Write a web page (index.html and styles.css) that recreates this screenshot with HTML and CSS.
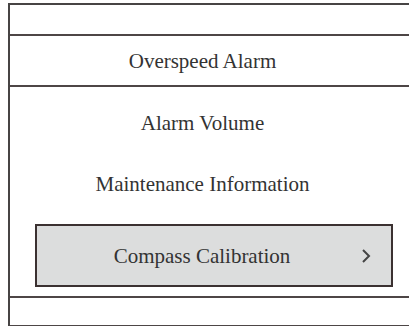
FILE: index.html
```html
<!DOCTYPE html>
<html lang="en">
<head>
<meta charset="UTF-8" />
<meta name="viewport" content="width=device-width, initial-scale=1" />
<title>Settings</title>
<link rel="stylesheet" href="styles.css">
</head>
<body>

<div class="panel">
  <div class="row blank-top"></div>
  <div class="row title">Overspeed Alarm</div>

  <div class="list">
    <div class="item">Alarm Volume</div>
    <div class="item">Maintenance Information</div>
    <div class="item selected">
      <span class="label">Compass Calibration</span>
      <svg class="chevron" width="10" height="16" viewBox="0 0 10 16">
        <polyline points="2,2 8,8 2,14" fill="none" stroke="#444" stroke-width="2" />
      </svg>
    </div>
  </div>

  <div class="row blank-bottom"></div>
</div>

</body>
</html>
```

FILE: styles.css
```css
body {
  margin: 0;
  padding: 0;
  background: #fff;
  font-family: "Liberation Serif", "DejaVu Serif", serif;
  font-size: 21px;
  color: #333;
}
.panel {
  margin: 3px 0 0 8px;
  border-left: 2px solid #474444;
  border-top: 2px solid #474444;
}
.row {
  border-bottom: 2px solid #4d4646;
  line-height: 24px;
  text-align: center;
  padding-right: 14px;
}
.blank-top {
  height: 29px;
}
.title {
  height: 51px;
  padding-top: 13px;
  box-sizing: border-box;
}
.list {
  height: 211px;
  padding-top: 24px;
  box-sizing: border-box;
  border-bottom: 2px solid #4d4646;
  display: flex;
  flex-direction: column;
}
.item {
  line-height: 24px;
  text-align: center;
  padding-right: 14px;
}
.item + .item {
  margin-top: 37px;
}
.item.selected {
  height: 63px;
  margin: 28px 16px 0 25px;
  padding: 0;
  box-sizing: border-box;
  background: #dcdddd;
  border: 2px solid #3b3131;
  display: flex;
  align-items: center;
}
.label {
  flex: 1;
  text-align: center;
  padding-left: 6px;
}
.chevron {
  margin-right: 20px;
}
.blank-bottom {
  height: 27px;
}
```
